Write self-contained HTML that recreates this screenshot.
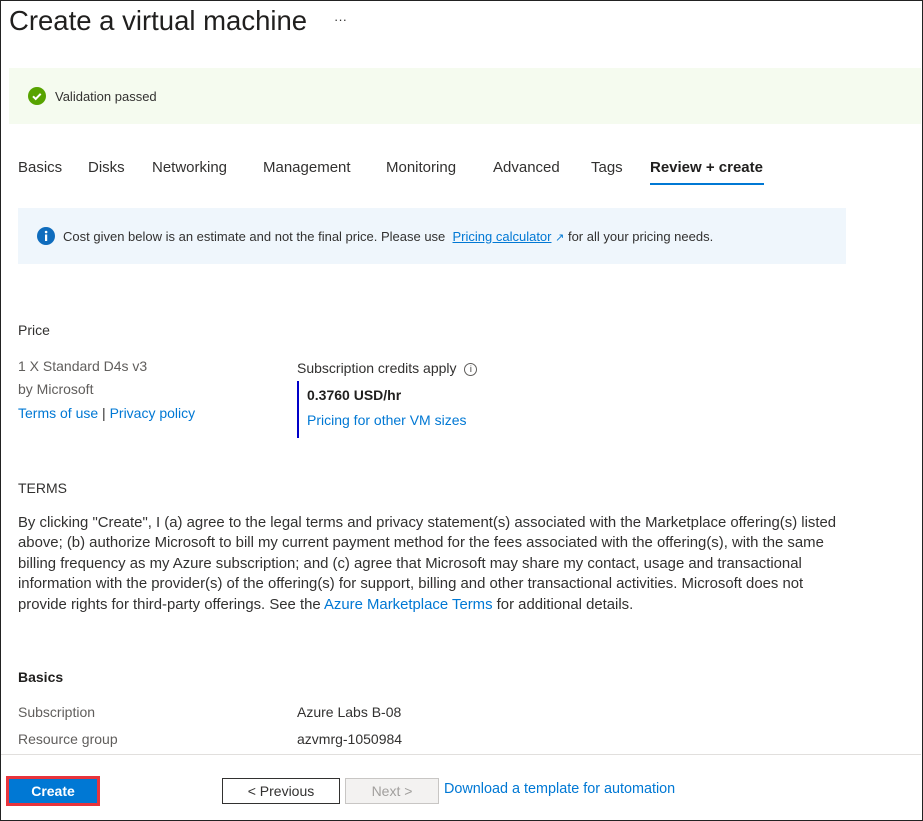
<!DOCTYPE html><html><head><style>
body{margin:0;width:923px;height:821px;overflow:hidden;font-family:"Liberation Sans",sans-serif;color:#323130;background:#fff}
.frame{position:absolute;left:0;top:0;width:921px;height:819px;border:1px solid #222;}
.a{position:absolute;white-space:nowrap}
a,.lk{color:#0078d4;text-decoration:none}
.t{font-size:14px}
</style></head><body><div class="frame"></div>
<div class="a" style="left:9px;top:5px;font-size:27.5px;color:#201f1e">Create a virtual machine</div>
<div class="a" style="left:334px;top:12px;font-size:13px">···</div>
<div class="a" style="left:9px;top:68px;width:912px;height:56px;background:#f5fbef"></div>
<svg class="a" style="left:28px;top:87px" width="18" height="18"><circle cx="9" cy="9" r="9" fill="#57a300"/><path d="M5 9.3l2.7 2.7 5-5.2" stroke="#fff" stroke-width="2" fill="none"/></svg>
<div class="a t" style="left:55px;top:89px;font-size:13px">Validation passed</div>
<div class="a t" style="top:159px;font-size:15px;left:18px">Basics</div>
<div class="a t" style="top:159px;font-size:15px;left:88px">Disks</div>
<div class="a t" style="top:159px;font-size:15px;left:152px">Networking</div>
<div class="a t" style="top:159px;font-size:15px;left:263px">Management</div>
<div class="a t" style="top:159px;font-size:15px;left:386px">Monitoring</div>
<div class="a t" style="top:159px;font-size:15px;left:493px">Advanced</div>
<div class="a t" style="top:159px;font-size:15px;left:591px">Tags</div>
<div class="a t" style="top:159px;font-size:15px;left:650px;color:#201f1e;font-weight:bold;font-weight:600">Review + create</div>
<div class="a" style="left:650px;top:183px;width:114px;height:2px;background:#0078d4"></div>
<div class="a" style="left:18px;top:208px;width:828px;height:56px;background:#eff6fc"></div>
<svg class="a" style="left:37px;top:227px" width="18" height="18"><circle cx="9" cy="9" r="9" fill="#0f6cbd"/><rect x="8" y="7.5" width="2.2" height="6.5" fill="#fff"/><circle cx="9.1" cy="5" r="1.3" fill="#fff"/></svg>
<div class="a" style="left:63px;top:229px;font-size:13px">Cost given below is an estimate and not the final price. Please use &nbsp;<span class="lk" style="text-decoration:underline">Pricing calculator</span> <span class="lk" style="font-size:11px">↗</span> for all your pricing needs.</div>
<div class="a t" style="left:18px;top:322px">Price</div>
<div class="a t" style="left:18px;top:358px;color:#605e5c">1 X Standard D4s v3</div>
<div class="a t" style="left:18px;top:381px;color:#605e5c">by Microsoft</div>
<div class="a t" style="left:18px;top:405px"><a>Terms of use</a> | <a>Privacy policy</a></div>
<div class="a t" style="left:297px;top:360px">Subscription credits apply &nbsp;<span style="display:inline-block;width:11px;height:11px;border:1px solid #605e5c;border-radius:50%;font-size:9px;text-align:center;line-height:11px;vertical-align:1px">i</span></div>
<div class="a" style="left:297px;top:381px;width:2px;height:57px;background:#0000c8"></div>
<div class="a t" style="left:307px;top:387px;font-weight:bold;color:#201f1e">0.3760 USD/hr</div>
<div class="a t lk" style="left:307px;top:412px">Pricing for other VM sizes</div>
<div class="a t" style="left:18px;top:480px">TERMS</div>
<div class="a t" style="left:18px;top:513px;line-height:20.4px;font-size:14.9px">By clicking "Create", I (a) agree to the legal terms and privacy statement(s) associated with the Marketplace offering(s) listed<br>above; (b) authorize Microsoft to bill my current payment method for the fees associated with the offering(s), with the same<br>billing frequency as my Azure subscription; and (c) agree that Microsoft may share my contact, usage and transactional<br>information with the provider(s) of the offering(s) for support, billing and other transactional activities. Microsoft does not<br>provide rights for third-party offerings. See the <a>Azure Marketplace Terms</a> for additional details.</div>
<div class="a t" style="left:18px;top:669px;font-weight:bold;color:#201f1e">Basics</div>
<div class="a t" style="left:18px;top:704px;color:#605e5c">Subscription</div>
<div class="a t" style="left:297px;top:704px">Azure Labs B-08</div>
<div class="a t" style="left:18px;top:731px;color:#605e5c">Resource group</div>
<div class="a t" style="left:297px;top:731px">azvmrg-1050984</div>
<div class="a" style="left:1px;top:754px;width:920px;height:1px;background:#e1dfdd"></div>
<div class="a" style="left:6px;top:776px;width:88px;height:24px;border:3px solid #e8343c;background:#0078d4;color:#fff;font-size:14px;font-weight:bold;text-align:center;line-height:24px">Create</div>
<div class="a" style="left:222px;top:778px;width:116px;height:24px;border:1px solid #323130;font-size:14px;text-align:center;line-height:24px">&lt; Previous</div>
<div class="a" style="left:345px;top:778px;width:92px;height:24px;border:1px solid #c8c6c4;background:#f3f2f1;color:#a19f9d;font-size:14px;text-align:center;line-height:24px">Next &gt;</div>
<div class="a t lk" style="left:444px;top:781px;font-size:14.4px">Download a template for automation</div>
</body></html>
